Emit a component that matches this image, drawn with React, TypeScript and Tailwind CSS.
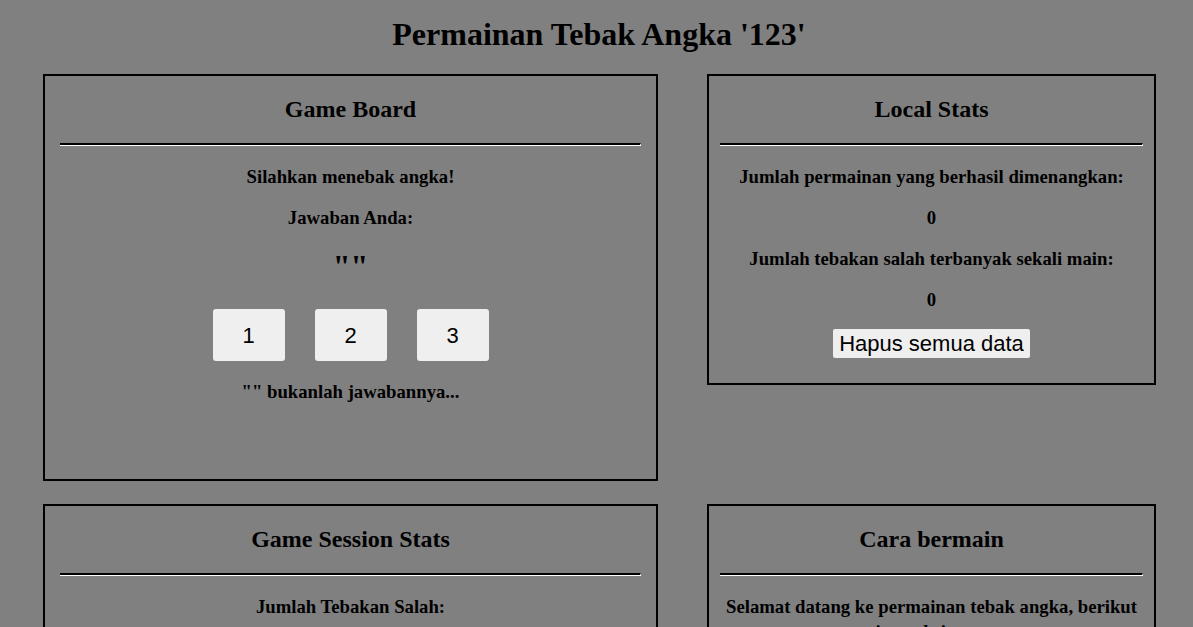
const serif = "font-['Liberation_Serif',serif]";

const Divider = () => (
  <div className="mx-auto w-[95%] border-t-2 border-b border-r border-t-black border-b-white border-r-white" />
);

type CardProps = {
  title: string;
  className?: string;
  children?: React.ReactNode;
};

const Card = ({ title, className, children }: CardProps) => (
  <section className={`border-2 border-black flex flex-col ${className ?? ""}`}>
    <h2 className="text-center text-[24px] font-bold leading-[28px] pt-[19px] mb-[20px]">{title}</h2>
    <Divider />
    <div className="flex flex-col items-center text-center px-4 pt-[18px]">{children}</div>
  </section>
);

const Line = ({ children, className }: { children: React.ReactNode; className?: string }) => (
  <p className={`text-[18.72px] font-bold leading-[25px] ${className ?? ""}`}>{children}</p>
);

const NumButton = ({ n }: { n: number }) => (
  <button className="w-[72px] h-[52px] bg-[#efefef] rounded-[3px] text-[22px] font-['Liberation_Sans',sans-serif] text-black">
    {n}
  </button>
);

export default function App() {
  return (
    <div className={`min-h-[627px] bg-[#808080] text-black ${serif} pb-10`}>
      <h1 className="text-center text-[32px] font-bold leading-[36px] pt-[16px] mb-[22px] pl-[5px]">
        Permainan Tebak Angka '123'
      </h1>
      <div className="grid grid-cols-[615px_449px] gap-x-[49px] gap-y-[23px] pl-[43px] items-start">
        <Card title="Game Board" className="h-[407px]">
          <Line>Silahkan menebak angka!</Line>
          <Line className="mt-4">Jawaban Anda:</Line>
          <p className="text-[32px] font-bold leading-[37px] mt-[18px]">""</p>
          <div className="flex gap-[30px] mt-[24px]">
            <NumButton n={1} />
            <NumButton n={2} />
            <NumButton n={3} />
          </div>
          <Line className="mt-[18px]">"" bukanlah jawabannya...</Line>
        </Card>
        <Card title="Local Stats" className="pb-[25px]">
          <Line>Jumlah permainan yang berhasil dimenangkan:</Line>
          <Line className="mt-4">0</Line>
          <Line className="mt-4">Jumlah tebakan salah terbanyak sekali main:</Line>
          <Line className="mt-4">0</Line>
          <button className="mt-[17px] bg-[#efefef] rounded-[2px] px-[6px] text-[22px] leading-[27px] pt-px pb-px font-['Liberation_Sans',sans-serif] text-black">
            Hapus semua data
          </button>
        </Card>
        <Card title="Game Session Stats">
          <Line>Jumlah Tebakan Salah:</Line>
          <Line className="mt-4">0</Line>
        </Card>
        <Card title="Cara bermain">
          <Line>Selamat datang ke permainan tebak angka, berikut instruksi-nya:</Line>
          <Line className="mt-4">Tebak angka yang benar dari tiga pilihan yang ada.</Line>
        </Card>
      </div>
    </div>
  );
}
